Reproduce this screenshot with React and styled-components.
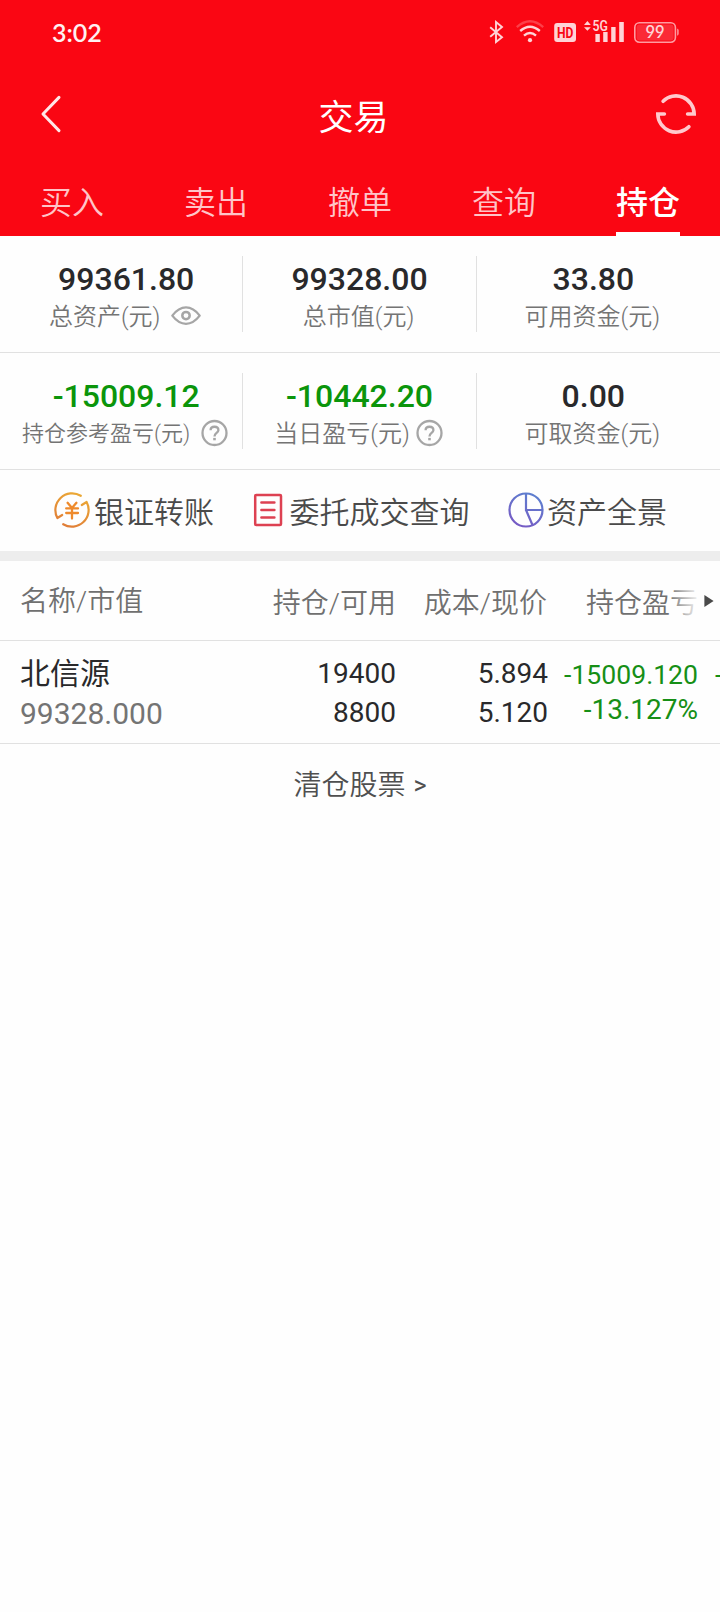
import React from 'react';
import styled, { createGlobalStyle } from 'styled-components';

const GlobalStyle = createGlobalStyle`
    * {
        box-sizing: border-box;
    }

    body {
        margin: 0;
        background-color: #FEFEFE;
        font-family: Roboto, "Noto Sans CJK SC", sans-serif;
    }

    svg {
        display: block;
        flex-shrink: 0;
        overflow: visible;
    }
`;

const Page = styled.div`
    width: 720px;
    min-height: 1612px;
    overflow: hidden;
    background-color: #FEFEFE;
`;

const Header = styled.header`
    height: 236px;
    background-color: #FA0613;
    color: #FFFFFF;
`;

const StatusBar = styled.div`
    display: flex;
    justify-content: space-between;
    align-items: center;
    height: 64px;
    padding: 0px 40px 0px 52px;
`;

const Clock = styled.span`
    font-family: Lato, sans-serif;
    font-size: 25px;
    line-height: 30px;
    font-weight: 600;
    color: #FFF0F1;
`;

const StatusIcons = styled.div`
    display: flex;
    align-items: center;
    gap: 8px;
`;

const TitleBar = styled.div`
    display: flex;
    justify-content: space-between;
    align-items: center;
    height: 100px;
    padding: 0px 20px 0px 36px;
`;

const TitleSide = styled.div`
    display: flex;
    justify-content: ${({ $end }) => ($end ? 'flex-end' : 'flex-start')};
    width: ${({ $end }) => ($end ? '64px' : '35px')};
`;

const Title = styled.h1`
    margin: 9px 0px 0px 0px;
    font-size: 35px;
    line-height: 40px;
    font-weight: 400;
`;

const Tabs = styled.nav`
    display: grid;
    grid-template-columns: repeat(5, 1fr);
    height: 72px;
`;

const Tab = styled.div`
    justify-self: center;
    height: 72px;
    padding-top: 18px;
    font-size: 32px;
    line-height: 43px;
    font-weight: ${({ $active }) => ($active ? 500 : 350)};
    color: ${({ $active }) => ($active ? '#FFFFFF' : '#FFC4C8')};
    border-bottom: 4px solid ${({ $active }) => ($active ? '#FFFFFF' : 'transparent')};
`;

const StatRow = styled.div`
    display: grid;
    grid-template-columns: repeat(3, 1fr);
    height: 117px;
    padding: 20px 10px;
    border-bottom: 1px solid #E1E1E1;
`;

const Stat = styled.div`
    height: 76px;
    border-right: 1px solid #E1E1E1;
    text-align: center;

    &:last-child {
        border-right: none;
    }
`;

const StatValue = styled.div`
    height: 46px;
    font-size: 32px;
    line-height: 46px;
    font-weight: 500;
    color: ${({ $loss }) => ($loss ? '#0B950B' : '#29292B')};
`;

const StatLabel = styled.div`
    display: flex;
    justify-content: center;
    align-items: center;
    gap: ${({ $gap }) => $gap || 0}px;
    height: 30px;
    padding-right: 2px;
    font-size: ${({ $small }) => ($small ? 22 : 24)}px;
    line-height: 30px;
    font-weight: 350;
    color: #747474;
    white-space: nowrap;

    svg {
        margin-bottom: 3px;
    }
`;

const Actions = styled.div`
    display: flex;
    justify-content: space-between;
    align-items: center;
    height: 91px;
    padding: 0px 53px;
    border-bottom: 10px solid #EDEDED;
`;

const Action = styled.div`
    display: flex;
    align-items: center;
    gap: ${({ $gap }) => $gap}px;

    svg {
        margin-bottom: 1px;
    }
`;

const ActionText = styled.span`
    font-size: 30px;
    line-height: 36px;
    padding-top: 4px;
    font-weight: 350;
    color: #4A4A4A;
`;

const TableHead = styled.div`
    position: relative;
    display: grid;
    grid-template-columns: 376px 151px 151px;
    align-items: center;
    height: 80px;
    padding-left: 20px;
    border-bottom: 1px solid #E1E1E1;
    font-size: 28px;
    line-height: 36px;
    font-weight: 350;
    color: #707070;
`;

const NameHead = styled.div`
    display: flex;
    justify-content: space-between;
    align-items: center;
`;

const HeadCell = styled.div`
    text-align: right;
    padding-top: ${({ $left }) => ($left ? 3 : 6)}px;
`;

const ScrollHint = styled.div`
    position: absolute;
    top: 0px;
    right: 0px;
    display: flex;
    align-items: center;
    justify-content: flex-end;
    width: 60px;
    height: 79px;
    padding-right: 6px;
    background: linear-gradient(to right, rgba(254, 254, 254, 0) 8px, #FEFEFE 41px);
`;

const HoldingRow = styled.div`
    display: grid;
    grid-template-columns: 226px 150px 152px 150px 22px;
    height: 103px;
    padding-left: 20px;
    border-bottom: 1px solid #E1E1E1;
`;

const Cell = styled.div`
    display: flex;
    flex-direction: column;
    align-items: ${({ $left }) => ($left ? 'flex-start' : 'flex-end')};
    padding-top: ${({ $top }) => $top || 13}px;
    font-size: 28px;
    line-height: ${({ $line }) => $line || 39}px;
    color: ${({ $loss }) => ($loss ? '#168F16' : '#29292B')};
    white-space: nowrap;
`;

const StockName = styled.span`
    font-size: 30px;
    line-height: 40px;
`;

const MarketValue = styled.span`
    font-size: 30px;
    line-height: 40px;
    color: #747474;
`;

const Profit = styled.span`
    font-size: 26.6px;
`;

const NextCell = styled(Cell)`
    align-items: flex-start;
    padding-left: 17px;
    font-size: 26.6px;
`;

const ClearedLink = styled.div`
    display: flex;
    justify-content: center;
    align-items: center;
    gap: 8px;
    height: 84px;
    font-size: 28px;
    line-height: 36px;
    font-weight: 350;
    color: #4F4F4F;
`;

const Chevron = styled.span`
    font-size: 25px;
    font-weight: 400;
`;

const ICON_COLOR = '#FFD3D6';

const BluetoothIcon = () => (
    <svg width="19" height="24" viewBox="0 0 19 24" fill="none" stroke={ICON_COLOR} strokeWidth="1.9">
        <path d="M1.2 7.2 13 17.2 7 22V2L13 7 1.2 16.8" />
    </svg>
);

const WifiIcon = () => (
    <svg width="30" height="24" viewBox="0 0 30 24" fill="none" stroke={ICON_COLOR} strokeWidth="2.4">
        <path d="M0.8 7.2Q14 -4.6 27.2 7.2" stroke="#FC3F49" />
        <path d="M4.2 11Q14 2.4 23.8 11" />
        <path d="M8 15.6Q14 10.4 20 15.6" />
        <circle cx="14" cy="20.2" r="2.1" fill={ICON_COLOR} stroke="none" />
    </svg>
);

const HdIcon = () => (
    <svg width="22" height="24" viewBox="0 0 22 24">
        <rect x="0.2" y="3" width="21.8" height="19" rx="3" fill={ICON_COLOR} />
        <text x="3" y="17.6" fontFamily="Roboto" fontWeight="700" fontSize="14.5" fill="#FA0613" textLength="16.4" lengthAdjust="spacingAndGlyphs">HD</text>
    </svg>
);

const SignalIcon = () => (
    <svg width="42" height="24" viewBox="0 0 42 24" fill={ICON_COLOR}>
        <path d="M0 5 3.4 1 6.8 5zM0 7.2H6.8L3.4 10.8z" />
        <text x="8.6" y="11" fontFamily="Roboto" fontWeight="600" fontSize="14" textLength="15.4" lengthAdjust="spacingAndGlyphs">5G</text>
        <rect x="11.4" y="14" width="4.4" height="8" />
        <rect x="19.2" y="12" width="4.4" height="10" />
        <rect x="27.2" y="7" width="4.4" height="15" />
        <rect x="35.2" y="2" width="4.6" height="20" />
    </svg>
);

const BatteryIcon = () => (
    <svg width="46" height="24" viewBox="0 0 46 24">
        <rect x="0.8" y="2.8" width="40.6" height="19.4" rx="4.6" fill="none" stroke="#FF9BA1" strokeWidth="1.6" />
        <rect x="2.6" y="4.6" width="37" height="15.8" rx="3" fill="#FB2A36" />
        <path d="M43 8.4q1.8 0.6 1.8 2v3.4q0 1.4-1.8 2z" fill="#FF8089" />
        <text x="21" y="18" textAnchor="middle" fontFamily="Lato" fontWeight="600" fontSize="16.5" fill="#FFD3D6">99</text>
    </svg>
);

const BackIcon = () => (
    <svg width="28" height="40" viewBox="0 0 28 40" fill="none" stroke="#FFE6E8" strokeWidth="3" strokeLinecap="round" strokeLinejoin="round">
        <path d="M23 3.4 7 20 23 36.6" />
    </svg>
);

const RefreshIcon = () => (
    <svg width="48" height="48" viewBox="-24 -24 48 48" fill="none" stroke="#FFC9CD" strokeWidth="3.6" strokeLinecap="round">
        <path d="M-12.9 -12.7A18.2 18.2 0 0 1 18.2 0H11.6" />
        <path d="M12.9 12.7A18.2 18.2 0 0 1 -18.2 0H-11.6" />
    </svg>
);

const EyeIcon = () => (
    <svg width="30" height="20" viewBox="0 0 30 20" fill="none" stroke="#A6A6A6" strokeWidth="2.3">
        <path d="M1.3 9.6Q7.6 1.4 15 1.4T28.7 9.6Q22.4 17.8 15 17.8T1.3 9.6z" strokeLinejoin="round" />
        <circle cx="15" cy="9.6" r="3.7" strokeWidth="2.5" />
    </svg>
);

const HelpIcon = () => (
    <svg width="27" height="28" viewBox="0 0 27 28" fill="none" stroke="#A6A6A6" strokeWidth="2.3">
        <circle cx="13.5" cy="14" r="12" />
        <path d="M9.6 11.2C9.6 6.6 17.4 6.6 17.4 11.2 17.4 14 13.5 14 13.5 17.4" />
        <path d="M13.5 18.9v2.4" strokeWidth="2.6" />
    </svg>
);

const TransferIcon = () => (
    <svg width="38" height="38" viewBox="-19 -19 38 38" fill="none" stroke="url(#transfer)" strokeWidth="2.2" strokeLinecap="round" strokeLinejoin="round">
        <defs>
            <linearGradient id="transfer" gradientUnits="userSpaceOnUse" x1="8" y1="-17" x2="-8" y2="17">
                <stop offset="0" stopColor="#EBAA35" />
                <stop offset="1" stopColor="#E07C38" />
            </linearGradient>
        </defs>
        <path d="M8.8 -14.2A16.7 16.7 0 0 0 -14.6 8L-9.8 5" />
        <path d="M-8.8 14.2A16.7 16.7 0 0 0 14.6 -8L9.8 -5" />
        <path d="M-4.4 -7.2 0 -2 4.4 -7.2M0 -2V8.6M-5.8 -1.6H6M-5.8 3H6" stroke="#EE8A2C" strokeWidth="2.3" />
    </svg>
);

const OrdersIcon = () => (
    <svg width="32" height="38" viewBox="-16 -19 32 38" fill="none" stroke="#DD4152" strokeWidth="2.5" strokeLinecap="round">
        <rect x="-12.8" y="-15" width="25.8" height="30" rx="1" />
        <path d="M-6.6 -7.4H6.4M-6.6 0H6.4M-6.6 7.5H6.4" />
    </svg>
);

const AssetsIcon = () => (
    <svg width="38" height="38" viewBox="-19 -19 38 38" fill="none" stroke="url(#assets)" strokeWidth="2.2">
        <defs>
            <linearGradient id="assets" gradientUnits="userSpaceOnUse" x1="8" y1="-17" x2="-8" y2="17">
                <stop offset="0" stopColor="#5C80CF" />
                <stop offset="1" stopColor="#7759C4" />
            </linearGradient>
        </defs>
        <circle r="16.5" />
        <path d="M0 -16.6V0H16.6M0 0 6.6 15.2" />
    </svg>
);

const tabs = ['买入', '卖出', '撤单', '查询', '持仓'];

export default function App() {
    return (
        <>
            <GlobalStyle />
            <Page>
                <Header>
                    <StatusBar>
                        <Clock>3:02</Clock>
                        <StatusIcons>
                            <BluetoothIcon />
                            <WifiIcon />
                            <HdIcon />
                            <SignalIcon />
                            <BatteryIcon />
                        </StatusIcons>
                    </StatusBar>
                    <TitleBar>
                        <TitleSide><BackIcon /></TitleSide>
                        <Title>交易</Title>
                        <TitleSide $end><RefreshIcon /></TitleSide>
                    </TitleBar>
                    <Tabs>
                        {tabs.map((tab) => (
                            <Tab key={tab} $active={tab === '持仓'}>{tab}</Tab>
                        ))}
                    </Tabs>
                </Header>

                <StatRow>
                    <Stat>
                        <StatValue>99361.80</StatValue>
                        <StatLabel $gap={11}>总资产(元) <EyeIcon /></StatLabel>
                    </Stat>
                    <Stat>
                        <StatValue>99328.00</StatValue>
                        <StatLabel>总市值(元)</StatLabel>
                    </Stat>
                    <Stat>
                        <StatValue>33.80</StatValue>
                        <StatLabel>可用资金(元)</StatLabel>
                    </Stat>
                </StatRow>
                <StatRow>
                    <Stat>
                        <StatValue $loss>-15009.12</StatValue>
                        <StatLabel $small $gap={11}>持仓参考盈亏(元) <HelpIcon /></StatLabel>
                    </Stat>
                    <Stat>
                        <StatValue $loss>-10442.20</StatValue>
                        <StatLabel $gap={6}>当日盈亏(元) <HelpIcon /></StatLabel>
                    </Stat>
                    <Stat>
                        <StatValue>0.00</StatValue>
                        <StatLabel>可取资金(元)</StatLabel>
                    </Stat>
                </StatRow>

                <Actions>
                    <Action $gap={3}>
                        <TransferIcon />
                        <ActionText>银证转账</ActionText>
                    </Action>
                    <Action $gap={6}>
                        <OrdersIcon />
                        <ActionText>委托成交查询</ActionText>
                    </Action>
                    <Action $gap={2}>
                        <AssetsIcon />
                        <ActionText>资产全景</ActionText>
                    </Action>
                </Actions>

                <TableHead>
                    <NameHead>
                        <HeadCell $left>名称/市值</HeadCell>
                        <HeadCell>持仓/可用</HeadCell>
                    </NameHead>
                    <HeadCell>成本/现价</HeadCell>
                    <HeadCell>持仓盈亏</HeadCell>
                    <ScrollHint>
                        <svg width="10" height="14" viewBox="0 0 10 14" fill="#4A4A4A">
                            <path d="M0.4 1 9.6 7 0.4 13z" />
                        </svg>
                    </ScrollHint>
                </TableHead>

                <HoldingRow>
                    <Cell $left>
                        <StockName>北信源</StockName>
                        <MarketValue>99328.000</MarketValue>
                    </Cell>
                    <Cell>
                        <span>19400</span>
                        <span>8800</span>
                    </Cell>
                    <Cell>
                        <span>5.894</span>
                        <span>5.120</span>
                    </Cell>
                    <Cell $loss $top={16} $line={35}>
                        <Profit>-15009.120</Profit>
                        <span>-13.127%</span>
                    </Cell>
                    <NextCell $loss $top={16} $line={35}>-</NextCell>
                </HoldingRow>

                <ClearedLink>
                    清仓股票 <Chevron>&gt;</Chevron>
                </ClearedLink>
            </Page>
        </>
    );
}
